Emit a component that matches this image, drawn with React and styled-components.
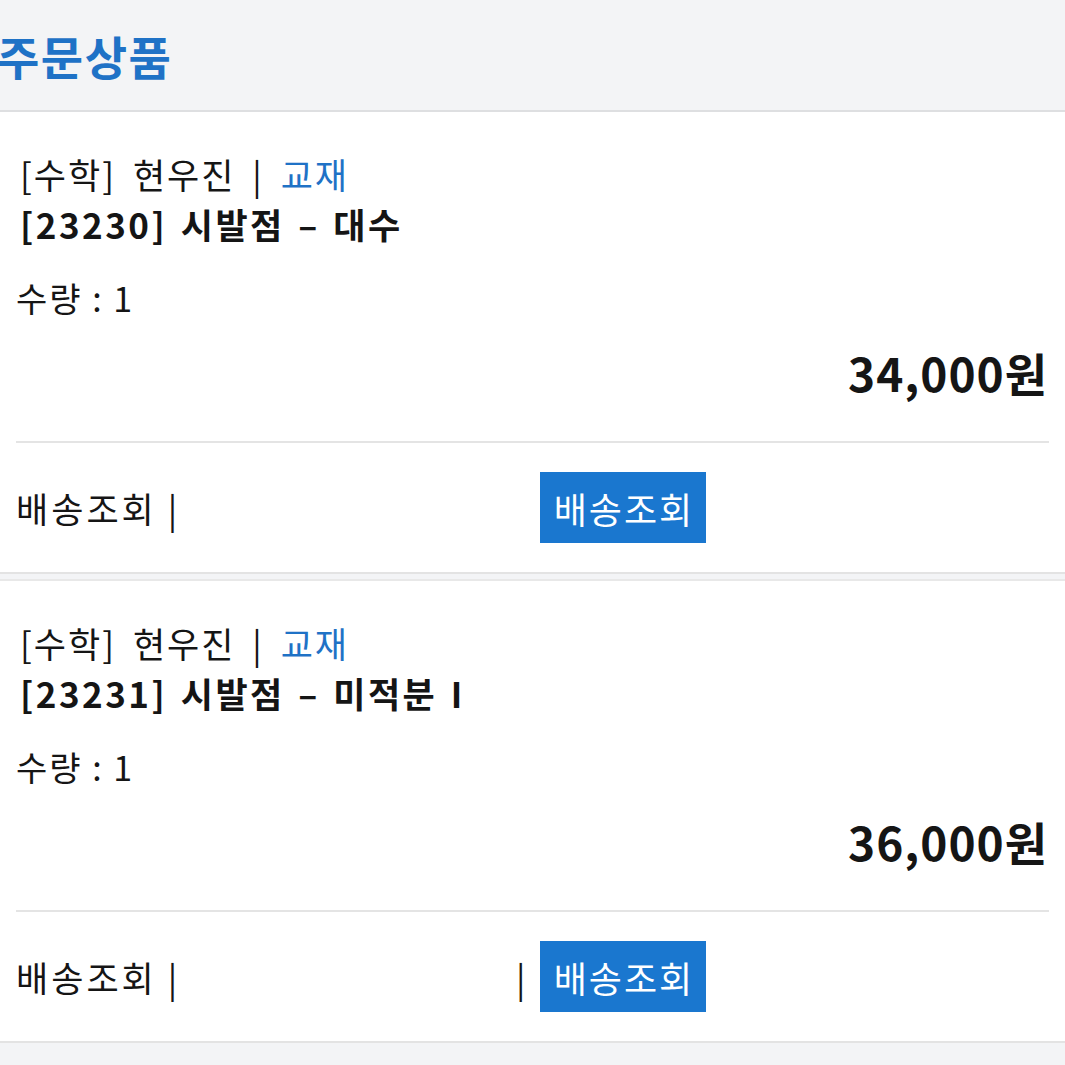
import styled, { createGlobalStyle } from "styled-components";

const GlobalStyle = createGlobalStyle`
    body {
        margin: 0;
        background: #f3f4f6;
        font-family: "Noto Sans CJK KR", "Noto Sans", sans-serif;
        color: #151515;
    }
`

const Page = styled.div`
    width: 1065px;
    min-height: 1065px;
    background: #f3f4f6;
`

const Header = styled.header`
    height: 110px;
    display: flex;
    align-items: center;
`

const Title = styled.h1`
    margin: 0 0 0 -3px;
    font-size: 46px;
    font-weight: 700;
    color: #1f72c6;
    letter-spacing: 1.5px;
`

const Card = styled.section`
    background: #fff;
    border-top: 2px solid ${p => p.first ? "#dedfe1" : "#e8e8e8"};
    border-bottom: 2px solid #e3e3e3;
    margin-bottom: 5px;
    padding: 37px 16px 0;
`

const Category = styled.div`
    font-size: 35px;
    line-height: 50px;
    padding-left: 4px;
    letter-spacing: 2px;
    word-spacing: 7px;
    white-space: pre;
`

const Blue = styled.span`
    color: #1f72c6;
`

const ProductName = styled.div`
    font-size: 35px;
    font-weight: 700;
    line-height: 50px;
    padding-left: 4px;
    letter-spacing: 2.5px;
    word-spacing: 3px;
    white-space: pre;
`

const Quantity = styled.div`
    margin-top: 24px;
    font-size: 34px;
    line-height: 50px;
    letter-spacing: 2px;
    white-space: pre;
`

const Price = styled.div`
    margin-top: 24px;
    font-size: 46px;
    font-weight: 700;
    line-height: 50px;
    text-align: right;
    letter-spacing: 1px;
    padding-right: 1px;
`

const Divider = styled.hr`
    margin: 44px 0 0;
    border: none;
    height: 2px;
    background: #e4e4e4;
`

const Footer = styled.div`
    display: flex;
    align-items: center;
    padding: 29px 0;
`

const ShipLabel = styled.span`
    width: 500px;
    font-size: 35px;
    line-height: 50px;
    letter-spacing: 3px;
    white-space: pre;
`

const Sep = styled.span`
    width: 24px;
    font-size: 35px;
    line-height: 50px;
`

const ShipButton = styled.button`
    width: 166px;
    height: 71px;
    border: none;
    background: #1a77cf;
    color: #fff;
    font-family: inherit;
    font-size: 36px;
    letter-spacing: 2px;
    padding: 0 0 0 2px;
    cursor: pointer;
`

const items = [
    { code: "23230", name: "대수", price: "34,000", sep: false },
    { code: "23231", name: "미적분 I", price: "36,000", sep: true },
]

export default function App() {
    return (
        <Page>
            <GlobalStyle />
            <Header>
                <Title>주문상품</Title>
            </Header>
            {items.map((item, i) => (
                <Card key={item.code} first={i === 0}>
                    <Category>[수학] 현우진 | <Blue>교재</Blue></Category>
                    <ProductName>[{item.code}] 시발점 – {item.name}</ProductName>
                    <Quantity>수량 : 1</Quantity>
                    <Price>{item.price}원</Price>
                    <Divider />
                    <Footer>
                        <ShipLabel>배송조회 |</ShipLabel>
                        <Sep>{item.sep ? "|" : ""}</Sep>
                        <ShipButton>배송조회</ShipButton>
                    </Footer>
                </Card>
            ))}
        </Page>
    )
}
